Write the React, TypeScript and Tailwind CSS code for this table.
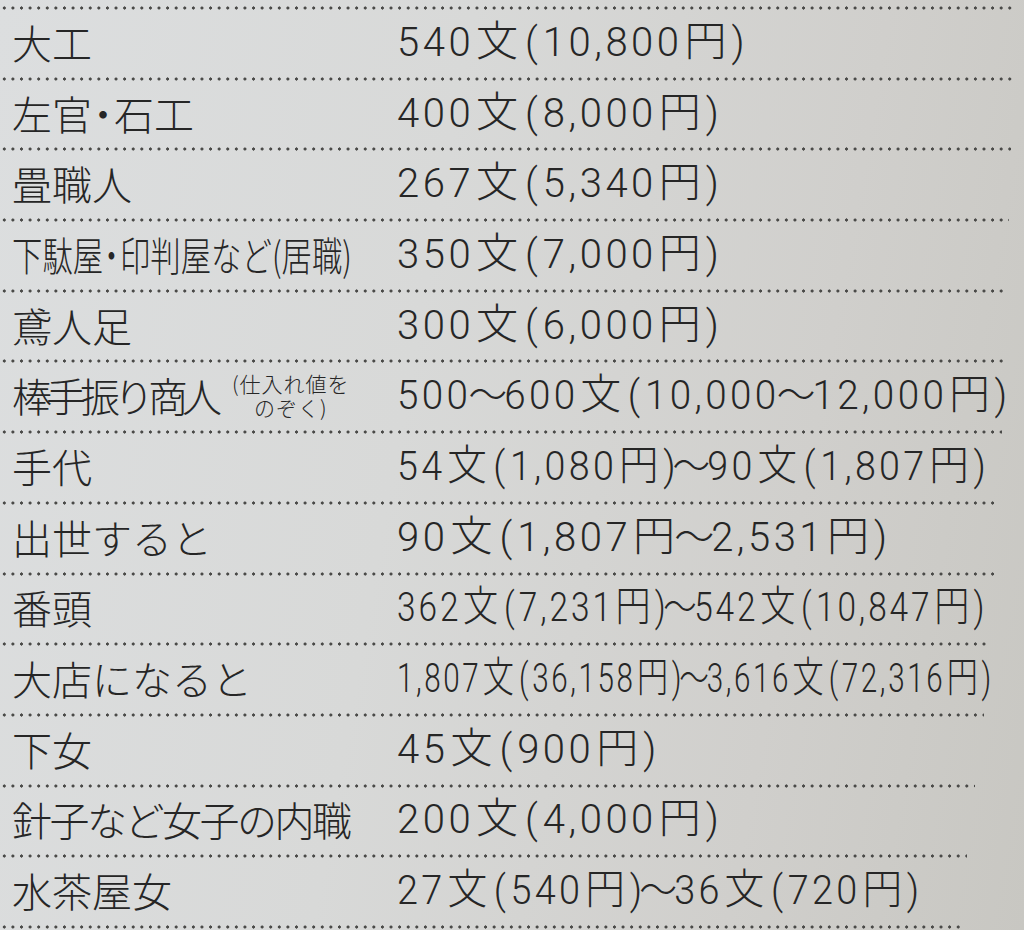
import React from 'react';

type Row = {
  label: string;
  labelClass?: string;
  note?: [string, string];
  value: string;
  valueClass?: string;
  line: string;
};

const rows: Row[] = [
  { label: '大工', value: '540文(10,800円)', line: 'w-[1015px]' },
  { label: '左官・石工', value: '400文(8,000円)', line: 'w-[1013px]' },
  { label: '畳職人', value: '267文(5,340円)', line: 'w-[1011px]' },
  {
    label: '下駄屋・印判屋など(居職)',
    labelClass: 'scale-x-[0.76] origin-left whitespace-nowrap',
    value: '350文(7,000円)',
    line: 'w-[1009px]',
  },
  { label: '鳶人足', value: '300文(6,000円)', line: 'w-[1007px]' },
  {
    label: '棒手振り商人',
    labelClass: 'tracking-[-6px]',
    note: ['(仕入れ値を', 'のぞく)'],
    value: '500〜600文(10,000〜12,000円)',
    valueClass: 'scale-x-[0.965] origin-left',
    line: 'w-[1005px]',
  },
  { label: '手代', value: '54文(1,080円)〜90文(1,807円)', valueClass: 'scale-x-[0.94] origin-left', line: 'w-[1002px]' },
  { label: '出世すると', value: '90文(1,807円〜2,531円)', line: 'w-[998px]' },
  { label: '番頭', value: '362文(7,231円)〜542文(10,847円)', valueClass: 'scale-x-[0.835] origin-left', line: 'w-[994px]' },
  { label: '大店になると', value: '1,807文(36,158円)〜3,616文(72,316円)', valueClass: 'scale-x-[0.74] origin-left', line: 'w-[990px]' },
  { label: '下女', value: '45文(900円)', line: 'w-[984px]' },
  { label: '針子など女子の内職', labelClass: 'tracking-[-2.5px]', value: '200文(4,000円)', line: 'w-[975px]' },
  { label: '水茶屋女', value: '27文(540円)〜36文(720円)', valueClass: 'scale-x-[0.945] origin-left', line: 'w-[967px]' },
];

const dots =
  'h-[4px] bg-[radial-gradient(circle,#4a4a48_1.4px,transparent_1.8px)] bg-[length:8.6px_4px] bg-repeat-x';

function Label({ text }: { text: string }) {
  const parts = text.split(/(・)/);
  return (
    <>
      {parts.map((p, i) =>
        p === '・' ? (
          <span key={i} className="-mx-[9px]">
            {p}
          </span>
        ) : (
          <span key={i}>{p}</span>
        ),
      )}
    </>
  );
}

function Value({ text }: { text: string }) {
  const tokens = text.split(/([0-9,]+|\(|\)|〜)/).filter(Boolean);
  return (
    <>
      {tokens.map((t, i) => {
        if (/^[0-9,]+$/.test(t))
          return (
            <span key={i} className="tracking-[3.5px]">
              {t}
            </span>
          );
        if (t === '(')
          return (
            <span key={i} className="mx-[5px]">
              (
            </span>
          );
        if (t === ')')
          return (
            <span key={i} className="ml-[3px]">
              )
            </span>
          );
        if (t === '〜')
          return (
            <span key={i} className="-mx-[3px]">
              〜
            </span>
          );
        return (
          <span key={i} className="text-[42px] mx-[2px]">
            {t}
          </span>
        );
      })}
    </>
  );
}

export default function App() {
  return (
    <div className="w-[1024px] h-[930px] overflow-hidden bg-[linear-gradient(100deg,#dcdedf_0%,#d8d9d8_40%,#d0cfcc_75%,#c8c7c2_100%)] pt-[6px] font-['Roboto','Noto_Sans_CJK_JP',sans-serif] font-light text-[#262626]">
      {rows.map((r) => (
        <div key={r.label}>
          <div className={`${dots} ${r.line}`} />
          <div className="grid h-[66.7px] grid-cols-[385px_1fr] items-center pl-[12px] pb-[3px]">
            <div className="flex items-center font-['Noto_Sans_CJK_JP',sans-serif]">
              <span className={`inline-block text-[40px] leading-none ${r.labelClass ?? ''}`}>
                <Label text={r.label} />
              </span>
              {r.note && (
                <span className="ml-[16px] flex flex-col items-center text-[21px] leading-[24px] tracking-[1px]">
                  <span>{r.note[0]}</span>
                  <span>{r.note[1]}</span>
                </span>
              )}
            </div>
            <div className={`whitespace-nowrap text-[40px] leading-none ${r.valueClass ?? ''}`}>
              <Value text={r.value} />
            </div>
          </div>
        </div>
      ))}
      <div className={`${dots} w-[960px]`} />
    </div>
  );
}
